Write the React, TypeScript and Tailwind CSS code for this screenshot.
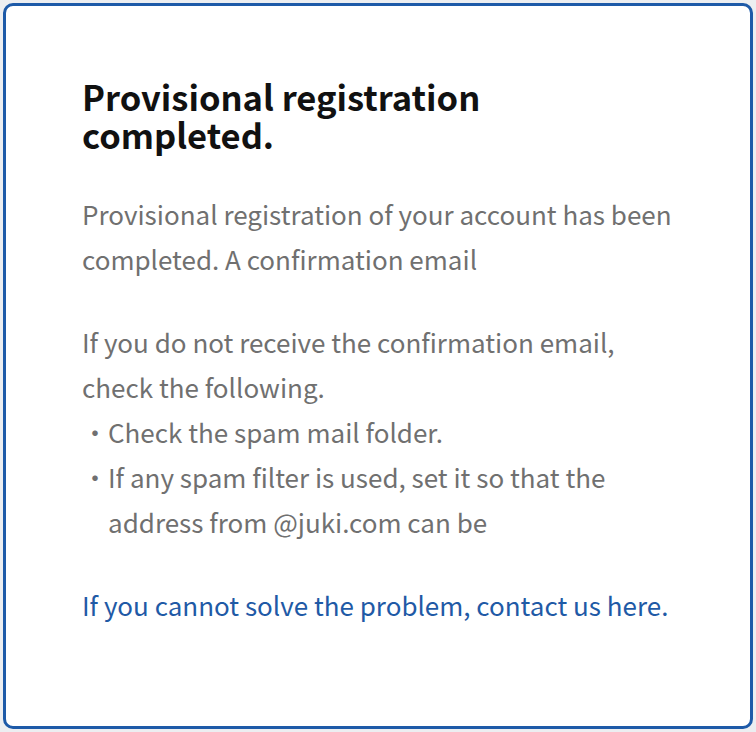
export default function App() {
  const font = { fontFamily: '"Noto Sans CJK JP", "Noto Sans", sans-serif' };
  return (
    <div className="w-[756px] h-[732px] bg-[#eceef1] p-[3px]" style={font}>
      <div className="h-full w-full rounded-[10px] border-[3px] border-[#1d5aa8] bg-white pl-[76px] pr-[40px] pt-[71px]">
        <h1 className="text-[34.5px] font-bold leading-[38px] text-[#111111]">
          Provisional registration
          <br />
          completed.
        </h1>
        <div className="mt-[38px] text-[26px] leading-[45px] text-[#707070]">
          <p>
            Provisional registration of your account has been
            <br />
            completed. A confirmation email
          </p>
          <p className="mt-[38px]">
            If you do not receive the confirmation email,
            <br />
            check the following.
          </p>
          <div className="flex">
            <span className="w-[26px] shrink-0">・</span>
            <span>Check the spam mail folder.</span>
          </div>
          <div className="flex">
            <span className="w-[26px] shrink-0">・</span>
            <span>
              If any spam filter is used, set it so that the
              <br />
              address from @juki.com can be
            </span>
          </div>
          <p className="mt-[38px] text-[#1f5aa6]">If you cannot solve the problem, contact us here.</p>
        </div>
      </div>
    </div>
  );
}
